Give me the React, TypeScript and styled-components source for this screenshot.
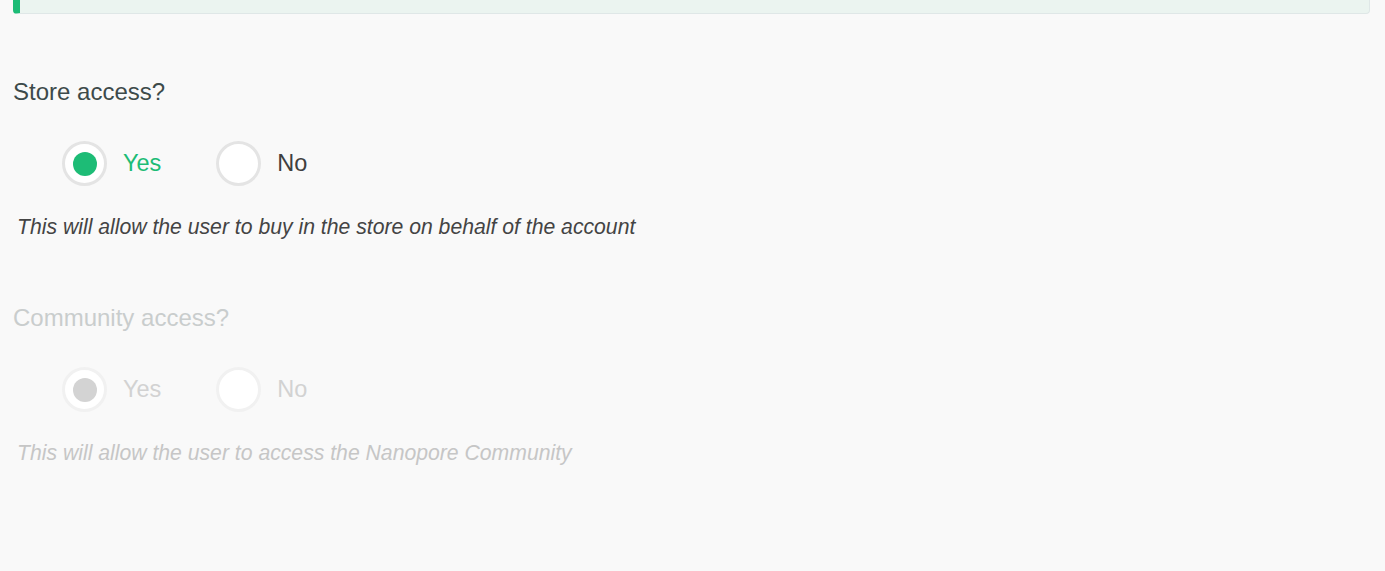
import React, { useState } from 'react';
import styled, { createGlobalStyle } from 'styled-components';

const GlobalStyle = createGlobalStyle`
    html, body {
        margin: 0;
        padding: 0;
        background: #f9f9f9;
        font-family: "Liberation Sans", Arial, sans-serif;
    }
`;

const Page = styled.div`
    padding: 0 15px 0 13px;
`;

const Banner = styled.div`
    height: 14px;
    box-sizing: border-box;
    background: #ebf4f0;
    border: 1px solid #dfe7e7;
    border-top: none;
    border-left: 7px solid #1dbc76;
    border-radius: 0 0 4px 4px;
`;

const Section = styled.section`
    padding-top: 64px;

    & + & {
        padding-top: 65px;
    }
`;

type DisabledProps = {
    disabled?: boolean;
}

const Question = styled.div<DisabledProps>`
    font-size: 24px;
    line-height: 28px;
    color: ${props => props.disabled ? '#c9cdcd' : '#3d4a4a'};
`;

const Options = styled.div`
    display: flex;
    align-items: center;
    gap: 55px;
    padding-left: 49px;
    margin-top: 35px;
`;

const Option = styled.label`
    display: flex;
    align-items: center;
    gap: 16px;
    cursor: pointer;
`;

type RadioProps = DisabledProps & {
    checked: boolean;
}

const Radio = styled.span<RadioProps>`
    width: 45px;
    height: 45px;
    box-sizing: border-box;
    border-radius: 50%;
    background: #fff;
    border: 3px solid ${props => props.disabled ? '#f1f1f1' : '#e4e4e4'};
    display: flex;
    align-items: center;
    justify-content: center;

    &::after {
        content: '';
        width: 24px;
        height: 24px;
        border-radius: 50%;
        background: ${props => props.disabled ? '#d3d3d3' : '#1dbc76'};
        display: ${props => props.checked ? 'block' : 'none'};
    }
`;

const OptionText = styled.span<RadioProps>`
    font-size: 23.5px;
    color: ${props => props.disabled ? '#d2d2d2' : props.checked ? '#1dbc76' : '#3f3f3f'};
`;

const Help = styled.p<DisabledProps>`
    margin: 29px 0 0 4px;
    font-size: 21.2px;
    line-height: 24px;
    font-style: italic;
    color: ${props => props.disabled ? '#c6c6c6' : '#444'};
`;

type QuestionBlockProps = {
    question: string;
    help: string;
    disabled?: boolean;
    value: boolean;
    onChange: (v: boolean) => void;
}

const QuestionBlock: React.FC<QuestionBlockProps> = ({ question, help, disabled, value, onChange }) => (
    <Section>
        <Question disabled={disabled}>{question}</Question>
        <Options>
            {[true, false].map(opt => (
                <Option key={String(opt)} onClick={() => !disabled && onChange(opt)}>
                    <Radio checked={value === opt} disabled={disabled} />
                    <OptionText checked={value === opt} disabled={disabled}>{opt ? 'Yes' : 'No'}</OptionText>
                </Option>
            ))}
        </Options>
        <Help disabled={disabled}>{help}</Help>
    </Section>
);

const App: React.FC = () => {
    const [store, setStore] = useState(true);
    const [community, setCommunity] = useState(true);

    return (
        <Page>
            <GlobalStyle />
            <Banner />
            <QuestionBlock
                question='Store access?'
                help='This will allow the user to buy in the store on behalf of the account'
                value={store}
                onChange={setStore}
            />
            <QuestionBlock
                question='Community access?'
                help='This will allow the user to access the Nanopore Community'
                value={community}
                onChange={setCommunity}
                disabled
            />
        </Page>
    );
}

export default App;
